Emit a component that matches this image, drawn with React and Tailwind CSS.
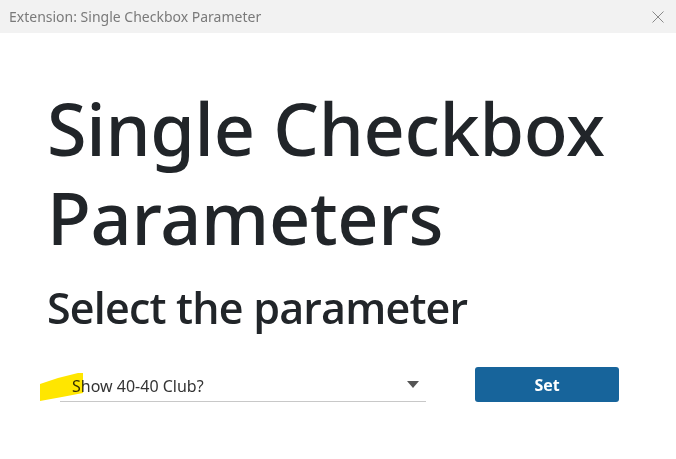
import React from "react";

export default function App() {
  return (
    <div className="w-[676px] h-[459px] bg-white overflow-hidden relative" style={{ fontFamily: '"Open Sans", "Noto Sans", sans-serif' }}>
      <div className="h-[33px] bg-[#f2f2f2] flex items-center justify-between pl-[9px] pr-[12px]">
        <span className="text-[14px] text-[#7a7a7a]" style={{ fontFamily: '"Noto Sans", sans-serif' }}>Extension: Single Checkbox Parameter</span>
        <svg width="12" height="12" viewBox="0 0 12 12" className="text-[#8a8a8a]">
          <path d="M0.5 0.5L11.5 11.5M11.5 0.5L0.5 11.5" stroke="currentColor" strokeWidth="1" fill="none" />
        </svg>
      </div>
      <div className="pl-[47px] pt-[51px]">
        <h1 className="text-[72px] leading-[89px] text-[#212529] font-medium tracking-[-0.3px] w-[600px]" style={{ fontFamily: '"Noto Sans", sans-serif' }}>Single Checkbox Parameters</h1>
        <h2 className="text-[43px] leading-[54px] text-[#212529] font-semibold tracking-[-0.8px] mt-[19px]">Select the parameter</h2>
        <div className="flex items-end mt-[32px]">
          <div className="relative w-[366px] ml-[13px] h-[35px] border-b border-[#c8c8c8] flex items-center justify-between pl-[12px] pr-[7px]">
            <span className="text-[16px] text-[#333] pt-[4px]" style={{ fontFamily: '"Noto Sans", sans-serif' }}>Show 40-40 Club?</span>
            <svg width="12" height="7" viewBox="0 0 12 7">
              <path d="M0 0H12L6 7Z" fill="#555" />
            </svg>
          </div>
          <button className="ml-[49px] w-[144px] h-[35px] rounded-[3px] bg-[#17649b] text-white font-bold text-[16px]">Set</button>
        </div>
      </div>
      <svg className="absolute left-0 top-0 pointer-events-none mix-blend-multiply" width="676" height="459">
        <path d="M40 384 L58 378 L78 373 L83 373 L83 393 L62 397 L40 401 Z" fill="#ffe600" />
      </svg>
    </div>
  );
}
